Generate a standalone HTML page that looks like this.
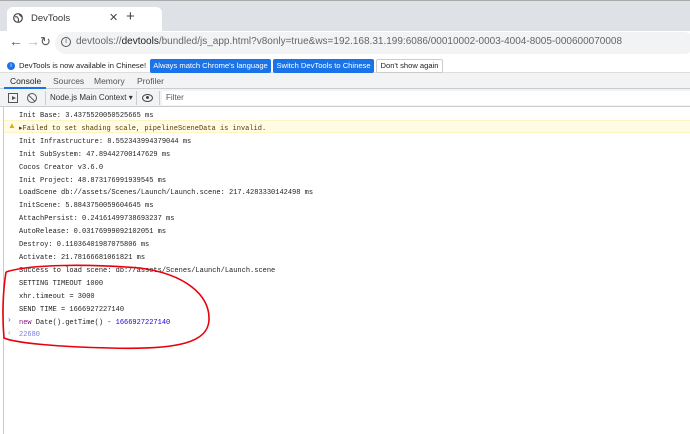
<!DOCTYPE html>
<html><head><meta charset="utf-8"><style>
*{margin:0;padding:0;box-sizing:border-box}
body{width:690px;height:434px;overflow:hidden;background:#fff;font-family:"Liberation Sans",sans-serif;position:relative}
.abs{position:absolute}
.mono{font-family:"Liberation Mono",monospace;font-size:7px;color:#222;white-space:pre}
.btn{position:absolute;top:59px;height:14px;font-size:7.6px;line-height:14px;text-align:center;border-radius:2px;white-space:nowrap;overflow:hidden}
</style></head><body>
<div class="abs" style="left:0;top:0;width:690px;height:31px;background:#dee1e6;border-top:1px solid #aaa"></div>
<div class="abs" style="left:7px;top:7px;width:155px;height:24px;background:#fff;border-radius:6px 6px 0 0"></div>
<svg class="abs" style="left:13px;top:13px" width="10" height="10" viewBox="0 0 10 10"><circle cx="5" cy="5" r="4.3" fill="none" stroke="#444" stroke-width="1.2"/><path d="M2 4 Q4 3 5 5 Q6 7 5 9 M6 1 Q7 3 9 4" stroke="#444" fill="none" stroke-width="1"/></svg>
<div class="abs" style="left:31px;top:13px;font-size:9.5px;color:#333">DevTools</div>
<div class="abs" style="left:109px;top:11px;font-size:11px;color:#444">✕</div>
<div class="abs" style="left:126px;top:8px;font-size:15px;color:#444">+</div>
<div class="abs" style="left:0;top:31px;width:690px;height:26px;background:#fff"></div>
<div class="abs" style="left:9px;top:33px;font-size:14px;color:#555">←</div>
<div class="abs" style="left:26px;top:33px;font-size:14px;color:#bbb">→</div>
<div class="abs" style="left:40px;top:34px;font-size:13px;color:#555">↻</div>
<div class="abs" style="left:55px;top:32px;width:640px;height:22px;background:#f1f3f4;border-radius:11px"></div>
<div class="abs" style="left:61px;top:37px;width:10px;height:10px;border:1.2px solid #555;border-radius:50%;font-size:7px;line-height:8px;text-align:center;color:#555">i</div>
<div class="abs" style="left:76px;top:36px;font-size:10px;color:#666;white-space:nowrap">devtools://<span style="color:#222">devtools</span>/bundled/js_app.html?v8only=true&amp;ws=192.168.31.199:6086/00010002-0003-4004-8005-000600070008</div>
<div class="abs" style="left:0;top:57px;width:690px;height:16px;background:#fff;border-bottom:1px solid #ddd"></div>
<div class="abs" style="left:7px;top:62px;width:8px;height:8px;background:#1a73e8;border-radius:50%;color:#fff;font-size:6px;text-align:center;line-height:8px">i</div>
<div class="abs" style="left:19px;top:59px;font-size:7.6px;line-height:14px;color:#222;white-space:nowrap">DevTools is now available in Chinese!</div>
<div class="btn" style="left:150px;width:121px;background:#1a73e8;color:#fff">Always match Chrome's language</div>
<div class="btn" style="left:273px;width:101px;background:#1a73e8;color:#fff">Switch DevTools to Chinese</div>
<div class="btn" style="left:376px;width:67px;border:1px solid #ccc;color:#222;background:#fff;line-height:12px">Don't show again</div>
<div class="abs" style="left:0;top:73px;width:690px;height:16px;background:#f1f3f4;border-bottom:1px solid #ccc"></div>
<div class="abs" style="left:4px;top:75px;width:42px;height:14px;border-bottom:2px solid #1a73e8"></div>
<div class="abs" style="left:10px;top:76px;font-size:8.5px;color:#222">Console</div>
<div class="abs" style="left:53px;top:76px;font-size:8.5px;color:#555">Sources</div>
<div class="abs" style="left:94px;top:76px;font-size:8.5px;color:#555">Memory</div>
<div class="abs" style="left:137px;top:76px;font-size:8.5px;color:#555">Profiler</div>
<div class="abs" style="left:0;top:89px;width:690px;height:18px;background:#f1f3f4;border-bottom:1px solid #ccc"></div>
<div class="abs" style="left:8px;top:93px;width:10px;height:10px;border:1px solid #555"></div>
<div class="abs" style="left:12px;top:96px;width:0;height:0;border-left:4px solid #555;border-top:2.5px solid transparent;border-bottom:2.5px solid transparent"></div>
<div class="abs" style="left:27px;top:93px;width:10px;height:10px;border:1.3px solid #555;border-radius:50%"></div>
<div class="abs" style="left:31px;top:93px;width:1.3px;height:10px;background:#555;transform:rotate(-45deg)"></div>
<div class="abs" style="left:45px;top:91px;width:1px;height:14px;background:#ccc"></div>
<div class="abs" style="left:50px;top:93px;font-size:8px;color:#333;white-space:nowrap">Node.js Main Context ▾</div>
<div class="abs" style="left:136px;top:91px;width:1px;height:14px;background:#ccc"></div>
<div class="abs" style="left:142px;top:94px;width:11px;height:8px;border:1.3px solid #444;border-radius:50%"></div>
<div class="abs" style="left:146px;top:96px;width:3px;height:3px;background:#444;border-radius:50%"></div>
<div class="abs" style="left:159px;top:91px;width:1px;height:14px;background:#ccc"></div>
<div class="abs" style="left:162px;top:91px;width:528px;height:14px;background:#fff"></div>
<div class="abs" style="left:166px;top:93px;font-size:8px;color:#555">Filter</div>
<div class="abs" style="left:3px;top:107px;width:1px;height:327px;background:#ccc"></div>
<div class="abs" style="left:4px;top:120px;width:686px;height:13px;background:#fffbe5;border-top:1px solid #fff5c2;border-bottom:1px solid #fff5c2"></div>
<div class="abs" style="left:8px;top:121px;font-size:8px;color:#e8a600">▲</div>
<div class="abs mono" style="left:19px;top:110px;line-height:12.9px">Init Base: 3.4375520050525665 ms
<span style="color:#5c3c00">▸Failed to set shading scale, pipelineSceneData is invalid.</span>
Init Infrastructure: 8.552343994379044 ms
Init SubSystem: 47.89442700147629 ms
Cocos Creator v3.6.0
Init Project: 48.873176991939545 ms
LoadScene db://assets/Scenes/Launch/Launch.scene: 217.4283330142498 ms
InitScene: 5.8843750059604645 ms
AttachPersist: 0.24161499738693237 ms
AutoRelease: 0.03176999092102051 ms
Destroy: 0.11036401987075806 ms
Activate: 21.78166681061821 ms
Success to load scene: db://assets/Scenes/Launch/Launch.scene
SETTING TIMEOUT 1000
xhr.timeout = 3000
SEND TIME = 1666927227140
<span style="color:#881280">new</span> Date().getTime() - <span style="color:#1c00cf">1666927227140</span>
<span style="color:#7a7ae0">22680</span></div>
<div class="abs" style="left:8px;top:315px;font-size:8px;color:#1a73e8">›</div>
<div class="abs" style="left:8px;top:328px;font-size:8px;color:#aaa">‹</div>
<svg class="abs" style="left:0;top:0" width="690" height="434"><path d="M6 272 C30 264 90 264 140 268 C185 274 210 295 209 320 C208 342 180 350 110 348 C60 347 15 343 4 338 C2 315 3 290 6 272" fill="none" stroke="#e8000a" stroke-width="1.6"/></svg>
</body></html>
